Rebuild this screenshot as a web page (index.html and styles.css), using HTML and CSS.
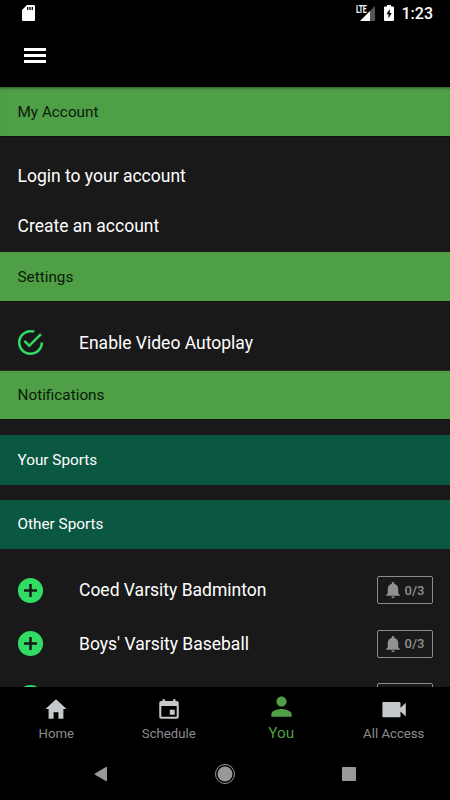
FILE: index.html
```html
<!DOCTYPE html>
<html lang="en">
<head>
  <meta charset="UTF-8">
  <meta name="viewport" content="width=device-width, initial-scale=1">
  <title>You</title>
  <link rel="stylesheet" href="styles.css">
</head>
<body>
  <!-- Shared icons -->
  <svg class="defs" width="0" height="0">
    <symbol id="bell" viewBox="0 0 512 512"><path d="M256 464c22.779 0 41.411-18.719 41.411-41.6h-82.823c0 22.881 18.633 41.6 41.412 41.6zm134.589-124.8V224.8c0-63.44-44.516-117.518-103.53-131.041V79.2c0-17.682-13.457-31.2-31.059-31.2s-31.059 13.518-31.059 31.2v14.559c-59.015 13.523-103.53 67.601-103.53 131.041v114.4L80 380.8v20.8h352v-20.8l-41.411-41.6z"/></symbol>
    <symbol id="add" viewBox="0 0 512 512"><path d="M256 48C141.125 48 48 141.125 48 256s93.125 208 208 208 208-93.125 208-208S370.875 48 256 48zm107 229h-86v86h-42v-86h-86v-42h86v-86h42v86h86v42z"/></symbol>
  </svg>

  <div class="phone">
    <div class="status-bar">
      <svg class="sd-card" viewBox="0 0 13 16"><path fill="#fff" d="M5 0h7a1 1 0 0 1 1 1v14a1 1 0 0 1-1 1H1a1 1 0 0 1-1-1V5z"/><path stroke="#000" stroke-width="1.3" d="M5.700 2v3M8 2v3M10.300 2v3"/></svg>
      <div class="status-right">
        <div class="signal">
          <svg viewBox="0 0 16 16"><path fill="#fff" d="M10 6v10H0z"/><path fill="#555" d="M10 6l5-5v15h-5z"/></svg>
          <span class="lte">LTE</span>
        </div>
        <svg class="battery" viewBox="0 0 10 16"><path fill="#fff" d="M3 0h4v1.500h2a1 1 0 0 1 1 1V15a1 1 0 0 1-1 1H1a1 1 0 0 1-1-1V2.500a1 1 0 0 1 1-1h2z"/><path d="M5.800 4L2.500 9.300h2V13.500L7.700 8H5.800z"/></svg>
        <span class="time">1:23</span>
      </div>
    </div>

    <header class="toolbar">
      <button class="menu-btn" aria-label="Menu">
        <span></span><span></span><span></span>
      </button>
    </header>

    <main class="content">
      <h2 class="section first">My Account</h2>
      <ul class="links">
        <li>Login to your account</li>
        <li>Create an account</li>
      </ul>

      <h2 class="section">Settings</h2>
      <div class="row setting">
        <svg class="row-icon" viewBox="0 0 512 512"><path d="M170.718 216.482L141.600 245.600l93.600 93.600 208-208-29.118-29.118L235.200 279.918l-64.482-63.436zM422.400 256c0 91.518-74.883 166.400-166.400 166.400S89.600 347.518 89.600 256 164.482 89.600 256 89.600c15.600 0 31.200 2.082 45.764 6.241L334 62.600C310.161 53.200 283.600 48 256 48 141.600 48 48 141.602 48 256s93.600 208 208 208 208-93.602 208-208h-41.600z"/></svg>
        <span>Enable Video Autoplay</span>
      </div>

      <h2 class="section notifications">Notifications</h2>
      <h3 class="group">Your Sports</h3>
      <h3 class="group">Other Sports</h3>
      <div class="sports">
        <div class="row">
          <svg class="row-icon"><use href="#add"/></svg>
          <span>Coed Varsity Badminton</span>
          <button class="alerts"><svg><use href="#bell"/></svg>0/3</button>
        </div>
        <div class="row">
          <svg class="row-icon"><use href="#add"/></svg>
          <span>Boys' Varsity Baseball</span>
          <button class="alerts"><svg><use href="#bell"/></svg>0/3</button>
        </div>
        <div class="row">
          <svg class="row-icon"><use href="#add"/></svg>
          <span></span>
          <button class="alerts"></button>
        </div>
      </div>
    </main>

    <nav class="tabs">
      <a class="tab">
        <svg viewBox="0 0 512 512"><path d="M208 448V320h96v128h97.600V256H464L256 64 48 256h62.400v192z"/></svg>
        Home
      </a>
      <a class="tab">
        <svg viewBox="0 0 512 512"><path d="M368 272h-96v96h96v-96zM336 64v32H176V64h-48v32h-24c-22 0-40 18-40 40v272c0 22 18 40 40 40h304c22 0 40-18 40-40V136c0-22-18-40-40-40h-24V64h-48zm72 344H104V196h304v212z"/></svg>
        Schedule
      </a>
      <a class="tab active">
        <svg viewBox="0 0 512 512"><path d="M256 256c52.805 0 96-43.201 96-96s-43.195-96-96-96-96 43.201-96 96 43.195 96 96 96zm0 48c-63.598 0-192 32.402-192 96v48h384v-48c0-63.598-128.402-96-192-96z"/></svg>
        You
      </a>
      <a class="tab">
        <svg viewBox="0 0 512 512"><path d="M384 232v-94c0-12-8-20-20-20H48c-12 0-20 8-20 20v262c0 12 8 20 20 20h316c12 0 20-8 20-20v-94l104 100V132z"/></svg>
        All Access
      </a>
    </nav>

    <div class="system-nav">
      <svg viewBox="0 0 22 22"><path d="M17 4.500v13c0 .7-.5 1-1.100.6L5 11.700c-.5-.3-.5-.9 0-1.200l10.900-6.600c.6-.4 1.100-.1 1.100.6z"/></svg>
      <svg viewBox="0 0 22 22"><circle cx="11" cy="11" r="7.500"/><circle class="ring" cx="11" cy="11" r="9.500"/></svg>
      <svg viewBox="0 0 22 22"><rect x="4" y="4" width="14" height="14" rx=".8"/></svg>
    </div>
  </div>
</body>
</html>
```
FILE: styles.css
```css
* {
  box-sizing: border-box;
}
body {
  margin: 0;
  background: #000;
  color: #fff;
  font-family: Roboto, Arial, sans-serif;
}
button {
  padding: 0;
  background: none;
  border: none;
  color: inherit;
  font-family: inherit;
}
svg {
  display: block;
  flex-shrink: 0;
}
.defs {
  position: absolute;
}
.phone {
  display: flex;
  flex-direction: column;
  height: 800px;
  overflow: hidden;
}
/* Android status bar */
.status-bar {
  display: flex;
  justify-content: space-between;
  align-items: center;
  height: 27px;
  padding: 0 17px 0 22px;
}
.sd-card {
  width: 13px;
  height: 16px;
  margin-top: -1px;
}
.status-right {
  display: flex;
  align-items: center;
}
.signal {
  position: relative;
  width: 15px;
  margin-right: 9px;
}
.signal svg {
  width: 16px;
  height: 16px;
  margin-top: -2px;
}
.lte {
  position: absolute;
  top: -2px;
  left: -4px;
  font-size: 10px;
  line-height: 9px;
  font-weight: bold;
  letter-spacing: -0.5px;
  transform: scaleX(.7);
  transform-origin: left;
}
.battery {
  width: 10px;
  height: 16px;
  margin: -1px 8px 0 0;
}
.time {
  font-size: 16px;
  font-weight: 500;
}
/* Toolbar */
.toolbar {
  display: flex;
  align-items: center;
  height: 60px;
  padding: 0 24px 3px;
}
.menu-btn {
  display: flex;
  flex-direction: column;
  gap: 3.5px;
  width: 22px;
}
.menu-btn span {
  height: 2.5px;
  background: #fff;
}
/* Scrolling content */
.content {
  flex: 1;
  min-height: 0;
  overflow: hidden;
  background: #191919;
}
.section,
.group {
  display: flex;
  align-items: center;
  height: 50px;
  margin: 0;
  padding: 0 17.5px;
  font-size: 15.3px;
  font-weight: 400;
}
.section {
  background: #4f9f46;
  border-bottom: 1px solid #0c160b;
  color: #0b1a0a;
}
.section.first {
  box-shadow: inset 0 3px 3px -2px rgba(0, 0, 0, .5);
}
.section.notifications {
  height: 49px;
}
.links {
  margin: 0;
  padding: 14px 17.5px 1px;
  list-style: none;
  font-size: 17.5px;
}
.links li {
  display: flex;
  align-items: center;
  height: 50px;
}
.row {
  display: flex;
  align-items: center;
  height: 53.5px;
  padding: 0 17px 0 15px;
  font-size: 17.5px;
}
.row span {
  flex: 1;
  margin-left: 33px;
}
.setting {
  height: 69px;
  padding-top: 13px;
  border-bottom: 1px solid #2a2f2a;
}
.row-icon {
  width: 31px;
  height: 31px;
  fill: #32db64;
}
.group {
  margin-top: 15px;
  background: #0a5742;
}
.group + .group {
  height: 49px;
  padding-bottom: 1px;
}
.sports {
  padding-top: 14.5px;
}
.alerts {
  display: flex;
  align-items: center;
  justify-content: center;
  gap: 2px;
  width: 56px;
  height: 28px;
  padding-right: 3px;
  border: 1px solid #8c8c8c;
  border-radius: 2px;
  color: #919191;
  font-size: 13px;
  font-weight: 500;
}
.alerts svg {
  width: 20px;
  height: 20px;
  fill: #919191;
}
/* Bottom tabs */
.tabs {
  display: flex;
  height: 60px;
}
.tab {
  display: flex;
  flex: 1;
  flex-direction: column;
  align-items: center;
  gap: 4px;
  padding-top: 9px;
  color: #8c8c8c;
  font-size: 13.2px;
  line-height: 16px;
}
.tab svg {
  width: 26px;
  height: 26px;
  fill: #c5c9cc;
}
.tab.active {
  gap: 5px;
  padding-top: 6px;
  color: #4f9f46;
  font-size: 15.3px;
}
.tab.active svg {
  width: 27px;
  height: 27px;
  fill: #4f9f46;
}
/* Android navigation keys */
.system-nav {
  display: flex;
  justify-content: space-between;
  height: 53px;
  padding: 16px 90px 0;
}
.system-nav svg {
  width: 22px;
  height: 22px;
  fill: #999;
}
.system-nav .ring {
  fill: none;
  stroke: #999;
}
```
